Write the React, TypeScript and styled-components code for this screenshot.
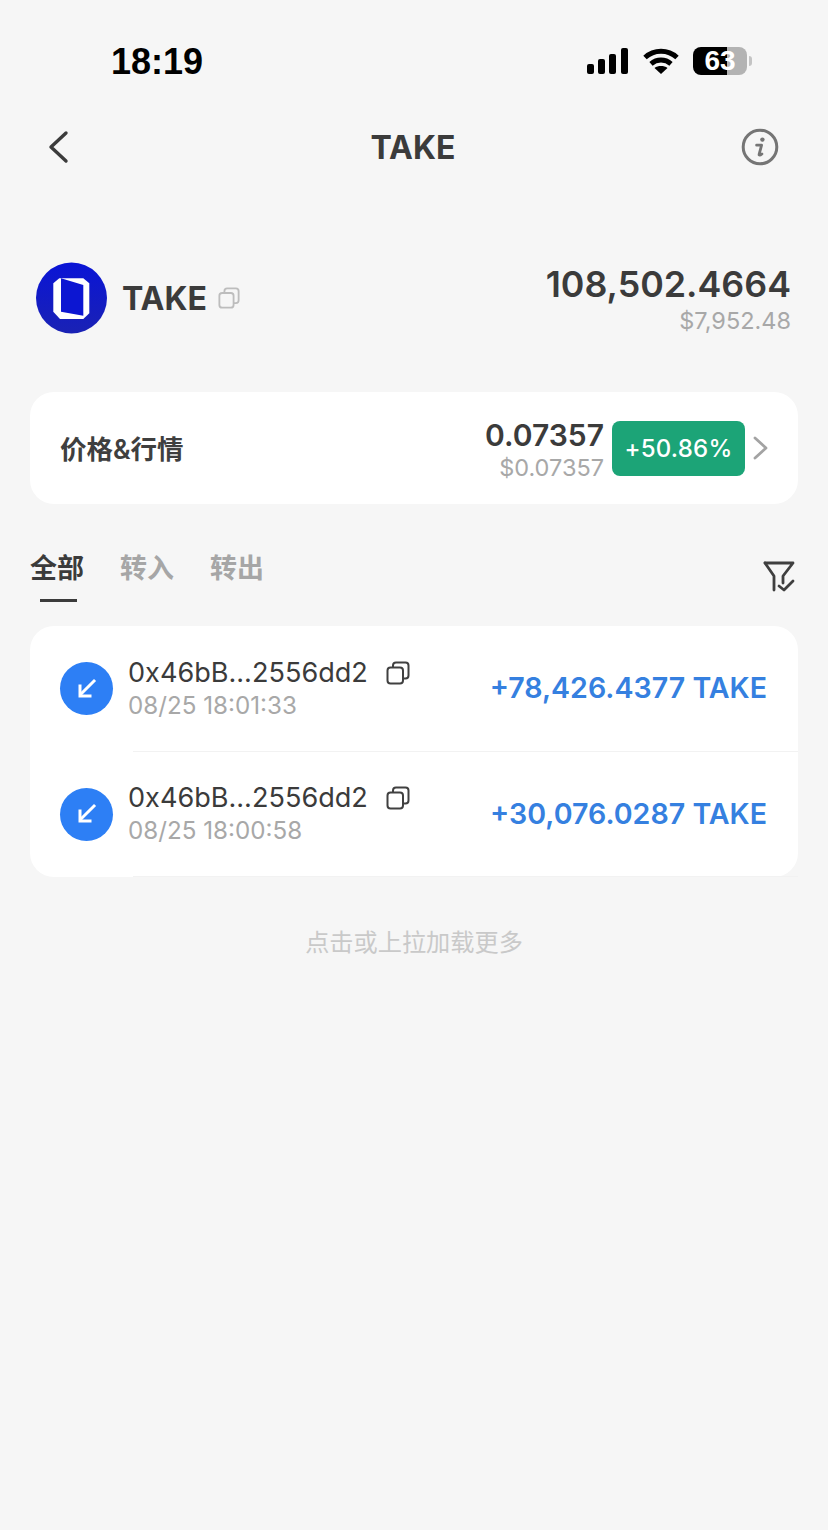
import React from 'react';
import styled, { createGlobalStyle } from 'styled-components';

const GlobalStyle = createGlobalStyle`
  html, body {
    margin: 0;
    padding: 0;
    background: #f6f6f6;
  }
  body {
    font-family: Inter, "Liberation Sans", "Noto Sans CJK SC", sans-serif;
  }
`;

const transfers = [
  { address: '0x46bB...2556dd2', time: '08/25 18:01:33', amount: '+78,426.4377 TAKE' },
  { address: '0x46bB...2556dd2', time: '08/25 18:00:58', amount: '+30,076.0287 TAKE' },
];

function CopyIcon({ size, color }: { size: number; color: string }) {
  return (
    <svg width={size} height={size} viewBox="0 0 24 24" fill="none" stroke={color} strokeWidth="2">
      <rect x="1.5" y="6.5" width="15.5" height="16" rx="3" />
      <path d="M7 6.500V4.500a3 3 0 0 1 3-3h9.500a3 3 0 0 1 3 3v10a3 3 0 0 1-3 3H17" />
    </svg>
  );
}

function App() {
  return (
    <Page>
      <GlobalStyle />
      <StatusBar>
        <Clock>18:19</Clock>
        <StatusIcons>
          <svg width="43" height="26" viewBox="0 0 43 26" fill="#000">
            <rect x="1" y="16" width="7" height="10" rx="2" />
            <rect x="12" y="11" width="7" height="15" rx="2" />
            <rect x="23" y="6" width="7" height="20" rx="2" />
            <rect x="35" y="0" width="7" height="26" rx="2" />
          </svg>
          <svg width="36" height="26" viewBox="0 0 36 26" fill="none" stroke="#000" strokeWidth="5">
            <path d="M2 9.500C11 1.200 25 1.200 34 9.500" />
            <path d="M8 15.800c5.800-5 14.200-5 20 0" />
            <path d="M18 26l-6.500-6c3.600-2.600 9.400-2.600 13 0z" fill="#000" stroke="none" />
          </svg>
          <Battery>
            <BatteryLevel>
              <BatteryText>63</BatteryText>
            </BatteryLevel>
            <BatteryTip />
          </Battery>
        </StatusIcons>
      </StatusBar>

      <NavBar>
        <svg width="24" height="34" viewBox="0 0 24 34" fill="none" stroke="#3b3b3b" strokeWidth="3.4" strokeLinecap="round" strokeLinejoin="round">
          <path d="M19 3L4 17l15 14" />
        </svg>
        <NavTitle>TAKE</NavTitle>
        <NavAction>
          <svg width="38" height="38" viewBox="0 0 38 38" fill="none">
            <circle cx="19" cy="19" r="16.8" stroke="#757575" strokeWidth="3" />
            <circle cx="21.400" cy="11.600" r="2.200" fill="#757575" />
            <path d="M15.600 17.200h5l-2.500 9.200c-.2 1 .8 1.300 2.800-.4" stroke="#757575" strokeWidth="2.800" strokeLinecap="round" strokeLinejoin="round" />
          </svg>
        </NavAction>
      </NavBar>

      <TokenRow>
        <TokenName>
          <svg width="72" height="72" viewBox="0 0 72 72">
            <defs>
              <linearGradient id="logoFill" x1="0" y1="0" x2="0" y2="1">
                <stop offset="0" stopColor="#0a14d6" />
                <stop offset="1" stopColor="#1a22b4" />
              </linearGradient>
            </defs>
            <circle cx="35.500" cy="36" r="35.500" fill="url(#logoFill)" />
            <path d="M23.300 16.300H47.300L53.300 21.300V51.300L47.300 57H24L17.300 49.700V21.300z" fill="#fff" />
            <path d="M25 16.300L47.300 23V53.700L25 49.700z" fill="#0c16d2" />
          </svg>
          <TokenLabel>TAKE</TokenLabel>
          <CopyIcon size={22} color="#bdbdbd" />
        </TokenName>
        <Balance>
          <BalanceAmount>108,502.4664</BalanceAmount>
          <BalanceValue>$7,952.48</BalanceValue>
        </Balance>
      </TokenRow>

      <PriceCard>
        <PriceLabel>价格&amp;行情</PriceLabel>
        <PriceRight>
          <PriceValues>
            <PriceAmount>0.07357</PriceAmount>
            <PriceFiat>$0.07357</PriceFiat>
          </PriceValues>
          <ChangeBadge>+50.86%</ChangeBadge>
          <svg width="15" height="24" viewBox="0 0 15 24" fill="none" stroke="#a3a3a3" strokeWidth="2.800" strokeLinecap="round" strokeLinejoin="round">
            <path d="M2 2l11 10L2 22" />
          </svg>
        </PriceRight>
      </PriceCard>

      <TabBar>
        <Tabs>
          <Tab $active>全部</Tab>
          <Tab>转入</Tab>
          <Tab>转出</Tab>
        </Tabs>
        <FilterButton>
          <svg width="32" height="34" viewBox="0 0 32 34" fill="none" stroke="#3f3f3f" strokeWidth="2.800" strokeLinejoin="round" strokeLinecap="round">
            <path d="M2 3h28L20 16v7" />
            <path d="M2 3l9 13v14" />
            <path d="M16 26l5 4 9-9" />
          </svg>
        </FilterButton>
      </TabBar>

      <TransferCard>
        {transfers.map(item => (
          <TransferRow key={item.time}>
            <DirectionBadge>
              <svg width="24" height="24" viewBox="0 0 24 24" fill="none" stroke="#fff" strokeWidth="3" strokeLinecap="square">
                <path d="M19 4L6 17" />
                <path d="M5 9v10h10" />
              </svg>
            </DirectionBadge>
            <TransferInfo>
              <AddressLine>
                <Address>{item.address}</Address>
                <CopyIcon size={24} color="#404040" />
              </AddressLine>
              <TransferTime>{item.time}</TransferTime>
            </TransferInfo>
            <TransferAmount>{item.amount}</TransferAmount>
            <RowDivider />
          </TransferRow>
        ))}
      </TransferCard>

      <LoadMore>点击或上拉加载更多</LoadMore>
    </Page>
  );
}

const Page = styled.div`
  width: 828px;
  height: 1530px;
  overflow: hidden;
  background: #f6f6f6;
`;

const StatusBar = styled.div`
  display: flex;
  align-items: center;
  justify-content: space-between;
  height: 40px;
  padding: 41px 76px 0 111px;
`;

const Clock = styled.div`
  margin-top: 2px;
  font-family: "Liberation Sans", sans-serif;
  font-size: 36px;
  font-weight: 700;
  color: #000;
`;

const StatusIcons = styled.div`
  display: flex;
  align-items: center;
  gap: 14px;
`;

const Battery = styled.div`
  display: flex;
  align-items: center;
  gap: 2px;
`;

const BatteryLevel = styled.div`
  display: flex;
  align-items: center;
  justify-content: center;
  width: 54px;
  height: 28px;
  border-radius: 8px;
  background: linear-gradient(90deg, #000 0 63%, #b3b3b3 63% 100%);
`;

const BatteryText = styled.span`
  font-family: "Liberation Sans", sans-serif;
  font-size: 28px;
  font-weight: 700;
  color: #fff;
`;

const BatteryTip = styled.div`
  width: 3px;
  height: 10px;
  border-radius: 0 3px 3px 0;
  background: #c4c4c4;
`;

const NavBar = styled.div`
  display: grid;
  grid-template-columns: 1fr auto 1fr;
  align-items: center;
  height: 40px;
  margin-top: 46px;
  padding: 0 49px 0 47px;
`;

const NavTitle = styled.div`
  font-size: 32px;
  font-weight: 700;
  color: #3b3b3b;
`;

const NavAction = styled.div`
  display: flex;
  justify-content: flex-end;
`;

const TokenRow = styled.div`
  display: flex;
  align-items: center;
  justify-content: space-between;
  height: 72px;
  margin-top: 95px;
  padding: 0 37px 0 36px;
`;

const TokenName = styled.div`
  display: flex;
  align-items: center;
`;

const TokenLabel = styled.div`
  margin: 0 11px 0 14px;
  font-size: 32px;
  font-weight: 700;
  color: #3b3b3b;
`;

const Balance = styled.div`
  display: flex;
  flex-direction: column;
  align-items: flex-end;
  gap: 1px;
  padding-top: 3px;
`;

const BalanceAmount = styled.div`
  font-size: 35.800px;
  font-weight: 600;
  line-height: 42px;
  color: #3b3b3b;
`;

const BalanceValue = styled.div`
  font-size: 23.500px;
  line-height: 30px;
  color: #a8a8a8;
`;

const PriceCard = styled.div`
  display: flex;
  align-items: center;
  justify-content: space-between;
  height: 112px;
  margin: 58px 30px 0;
  padding: 0 30px;
  border-radius: 24px;
  background: #fff;
`;

const PriceLabel = styled.div`
  margin-bottom: 2px;
  font-size: 26.500px;
  font-weight: 600;
  color: #3f3f3f;
`;

const PriceRight = styled.div`
  display: flex;
  align-items: center;
`;

const PriceValues = styled.div`
  display: flex;
  flex-direction: column;
  align-items: flex-end;
  gap: 2px;
  padding-top: 2px;
`;

const PriceAmount = styled.div`
  font-size: 30px;
  font-weight: 600;
  line-height: 36px;
  color: #3b3b3b;
`;

const PriceFiat = styled.div`
  font-size: 23.500px;
  line-height: 26px;
  color: #a8a8a8;
`;

const ChangeBadge = styled.div`
  display: flex;
  align-items: center;
  justify-content: center;
  width: 133px;
  height: 55px;
  margin: 0 8px 0 8px;
  border-radius: 8px;
  font-size: 24px;
  font-weight: 500;
  letter-spacing: 0.2px;
  color: #fff;
  background: #1ca477;
`;

const TabBar = styled.div`
  display: flex;
  align-items: flex-start;
  justify-content: space-between;
  height: 99px;
  margin-top: 45px;
  padding: 1px 33px 0 30px;
  box-sizing: border-box;
`;

const Tabs = styled.div`
  display: flex;
  gap: 36px;
`;

const Tab = styled.div<{ $active?: boolean }>`
  position: relative;
  font-size: 27px;
  font-weight: 600;
  line-height: 38px;
  color: ${props => (props.$active ? '#3b3b3b' : '#a6a6a6')};

  ${props =>
    props.$active &&
    `
    &::after {
      content: '';
      position: absolute;
      left: 10px;
      top: 49px;
      width: 37px;
      height: 3px;
      background: #3b3b3b;
    }
  `}
`;

const FilterButton = styled.div`
  margin-top: 10px;
`;

const TransferCard = styled.div`
  margin: -22px 30px 0;
  border-radius: 24px;
  background: #fff;
`;

const TransferRow = styled.div`
  position: relative;
  display: flex;
  align-items: center;
  height: 125.500px;
  padding: 0 31px 0 30px;
  box-sizing: border-box;
`;

const DirectionBadge = styled.div`
  display: flex;
  align-items: center;
  justify-content: center;
  flex-shrink: 0;
  width: 53px;
  height: 53px;
  border-radius: 50%;
  background: #2d7ff5;
`;

const TransferInfo = styled.div`
  flex: 1;
  margin-left: 15px;
`;

const AddressLine = styled.div`
  display: flex;
  align-items: center;
  gap: 18px;
`;

const Address = styled.div`
  font-size: 27.100px;
  line-height: 32px;
  color: #3b3b3b;
`;

const TransferTime = styled.div`
  margin-top: 2px;
  font-size: 24.200px;
  line-height: 30px;
  color: #a8a8a8;
`;

const TransferAmount = styled.div`
  padding-bottom: 2px;
  font-size: 28.600px;
  font-weight: 600;
  color: #3580e0;
`;

const RowDivider = styled.div`
  position: absolute;
  left: 103px;
  right: 0;
  bottom: 0;
  height: 1px;
  background: #f2f2f2;
`;

const LoadMore = styled.div`
  margin-top: 49px;
  font-size: 24.200px;
  line-height: 34px;
  text-align: center;
  color: #c9c9c9;
`;

export default App;
